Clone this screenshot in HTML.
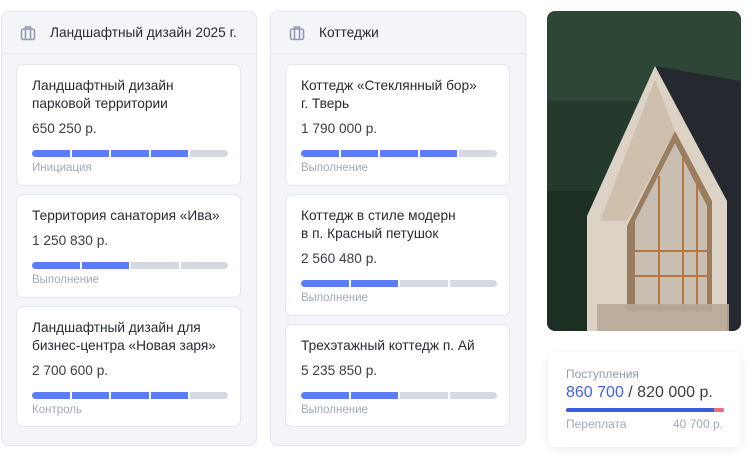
<!DOCTYPE html>
<html><head><meta charset="utf-8"><style>
*{box-sizing:border-box;margin:0;padding:0}
body{width:753px;height:470px;background:#fff;font-family:"Liberation Sans",sans-serif;position:relative;overflow:hidden;color:#262a33}
.col{position:absolute;top:11px;width:256px;height:435px;background:#f4f5f9;border:1px solid #e3e6ee;border-radius:8px}
.hd{height:42px;border-bottom:1px solid #e3e6ee;display:flex;align-items:center;padding-left:18px;font-size:13.7px;color:#262a33}
.hd svg{margin-right:14px}
.card{position:absolute;left:14px;width:225px;background:#fff;border:1px solid #e3e6ee;border-radius:7px;padding:0 15px}
.t{position:absolute;left:15px;top:12px;font-size:13.7px;line-height:18px;width:205px}
.p{position:absolute;left:15px;font-size:13.7px;color:#3a3e47}
.bar{position:absolute;left:15px;width:196px;height:7px;display:flex;gap:2px}
.bar i{flex:1;background:#d5dae2;height:7px}
.bar i.b{background:#5a7dfa}
.bar i:first-child{border-radius:4px 0 0 4px}.bar i:last-child{border-radius:0 4px 4px 0}
.l{position:absolute;left:15px;font-size:11.5px;color:#a0a9bc}
</style></head><body>
<div class="col" style="left:1px">
<div class="hd"><svg width="16" height="16" viewBox="0 0 16 16" fill="none" stroke="#8f9bb3" stroke-width="1.6"><rect x="1.5" y="4" width="13" height="10.5" rx="2"/><path d="M5.5 4V2h5v2M5.5 4v10.5M10.5 4v10.5"/></svg>Ландшафтный дизайн 2025 г.</div>
<div class="card" style="top:52px;height:122px"><div class="t">Ландшафтный дизайн<br>парковой территории</div><div class="p" style="top:56px">650 250 р.</div><div class="bar" style="top:85px"><i class="b"></i><i class="b"></i><i class="b"></i><i class="b"></i><i></i></div><div class="l" style="top:97px">Инициация</div></div>
<div class="card" style="top:182px;height:104px"><div class="t">Территория санатория «Ива»</div><div class="p" style="top:38px">1 250 830 р.</div><div class="bar" style="top:67px"><i class="b"></i><i class="b"></i><i></i><i></i></div><div class="l" style="top:79px">Выполнение</div></div>
<div class="card" style="top:294px;height:121px"><div class="t">Ландшафтный дизайн для<br>бизнес-центра «Новая заря»</div><div class="p" style="top:56px">2 700 600 р.</div><div class="bar" style="top:85px"><i class="b"></i><i class="b"></i><i class="b"></i><i class="b"></i><i></i></div><div class="l" style="top:97px">Контроль</div></div>
</div>
<div class="col" style="left:270px">
<div class="hd"><svg width="16" height="16" viewBox="0 0 16 16" fill="none" stroke="#8f9bb3" stroke-width="1.6"><rect x="1.5" y="4" width="13" height="10.5" rx="2"/><path d="M5.5 4V2h5v2M5.5 4v10.5M10.5 4v10.5"/></svg>Коттеджи</div>
<div class="card" style="top:52px;height:122px"><div class="t">Коттедж «Стеклянный бор»<br>г. Тверь</div><div class="p" style="top:56px">1 790 000 р.</div><div class="bar" style="top:85px"><i class="b"></i><i class="b"></i><i class="b"></i><i class="b"></i><i></i></div><div class="l" style="top:97px">Выполнение</div></div>
<div class="card" style="top:182px;height:122px"><div class="t">Коттедж в стиле модерн<br>в п. Красный петушок</div><div class="p" style="top:56px">2 560 480 р.</div><div class="bar" style="top:85px"><i class="b"></i><i class="b"></i><i></i><i></i></div><div class="l" style="top:97px">Выполнение</div></div>
<div class="card" style="top:312px;height:103px"><div class="t">Трехэтажный коттедж п. Ай</div><div class="p" style="top:38px">5 235 850 р.</div><div class="bar" style="top:67px"><i class="b"></i><i class="b"></i><i></i><i></i></div><div class="l" style="top:79px">Выполнение</div></div>
</div>
<svg style="position:absolute;left:547px;top:11px;border-radius:8px" width="194" height="320" viewBox="0 0 194 320">
<defs><clipPath id="c"><rect width="194" height="320" rx="8"/></clipPath></defs>
<g clip-path="url(#c)">
<rect width="194" height="320" fill="#243a2c"/>
<rect width="194" height="90" fill="#2e4636"/>
<rect y="180" width="60" height="140" fill="#1c2f22"/>
<polygon points="108,55 194,70 194,320 170,320 170,190" fill="#25292f"/>
<polygon points="108,55 40,205 40,320 180,320 180,190" fill="#ddd2c6"/>
<polygon points="108,68 53,210 80,210 128,120" fill="#cfc0ad"/>
<polygon points="128,120 80,215 80,300 165,300 165,190" fill="#9a7c5e"/>
<polygon points="128,132 88,210 88,295 160,295 160,195" fill="#c9beb2"/>
<path d="M88,240H160M88,265H160M112,165V295M136,145V295M150,170V295" stroke="#b8753e" stroke-width="2"/>
<rect x="50" y="293" width="132" height="30" fill="#b8a898" opacity="0.9"/>
</g></svg>
<div style="position:absolute;left:548px;top:352px;width:193px;height:95px;background:#fff;border-radius:8px;box-shadow:0 2px 10px rgba(0,0,0,0.08)">
<div style="position:absolute;left:18px;top:15px;font-size:12px;color:#8f9bb3">Поступления</div>
<div style="position:absolute;left:18px;top:32px;font-size:16px;color:#3a3e47"><span style="color:#3d63e0">860 700</span> / 820 000 р.</div>
<div style="position:absolute;left:18px;top:56px;width:158px;height:4px;background:#3a5bdc;border-radius:2px"></div>
<div style="position:absolute;left:166px;top:56px;width:10px;height:4px;background:#f06b7c;border-radius:0 2px 2px 0"></div>
<div style="position:absolute;left:18px;top:65px;font-size:12px;color:#a0a9bc">Переплата</div>
<div style="position:absolute;right:18px;top:65px;font-size:12px;color:#a0a9bc">40 700 р.</div>
</div>
</body></html>
